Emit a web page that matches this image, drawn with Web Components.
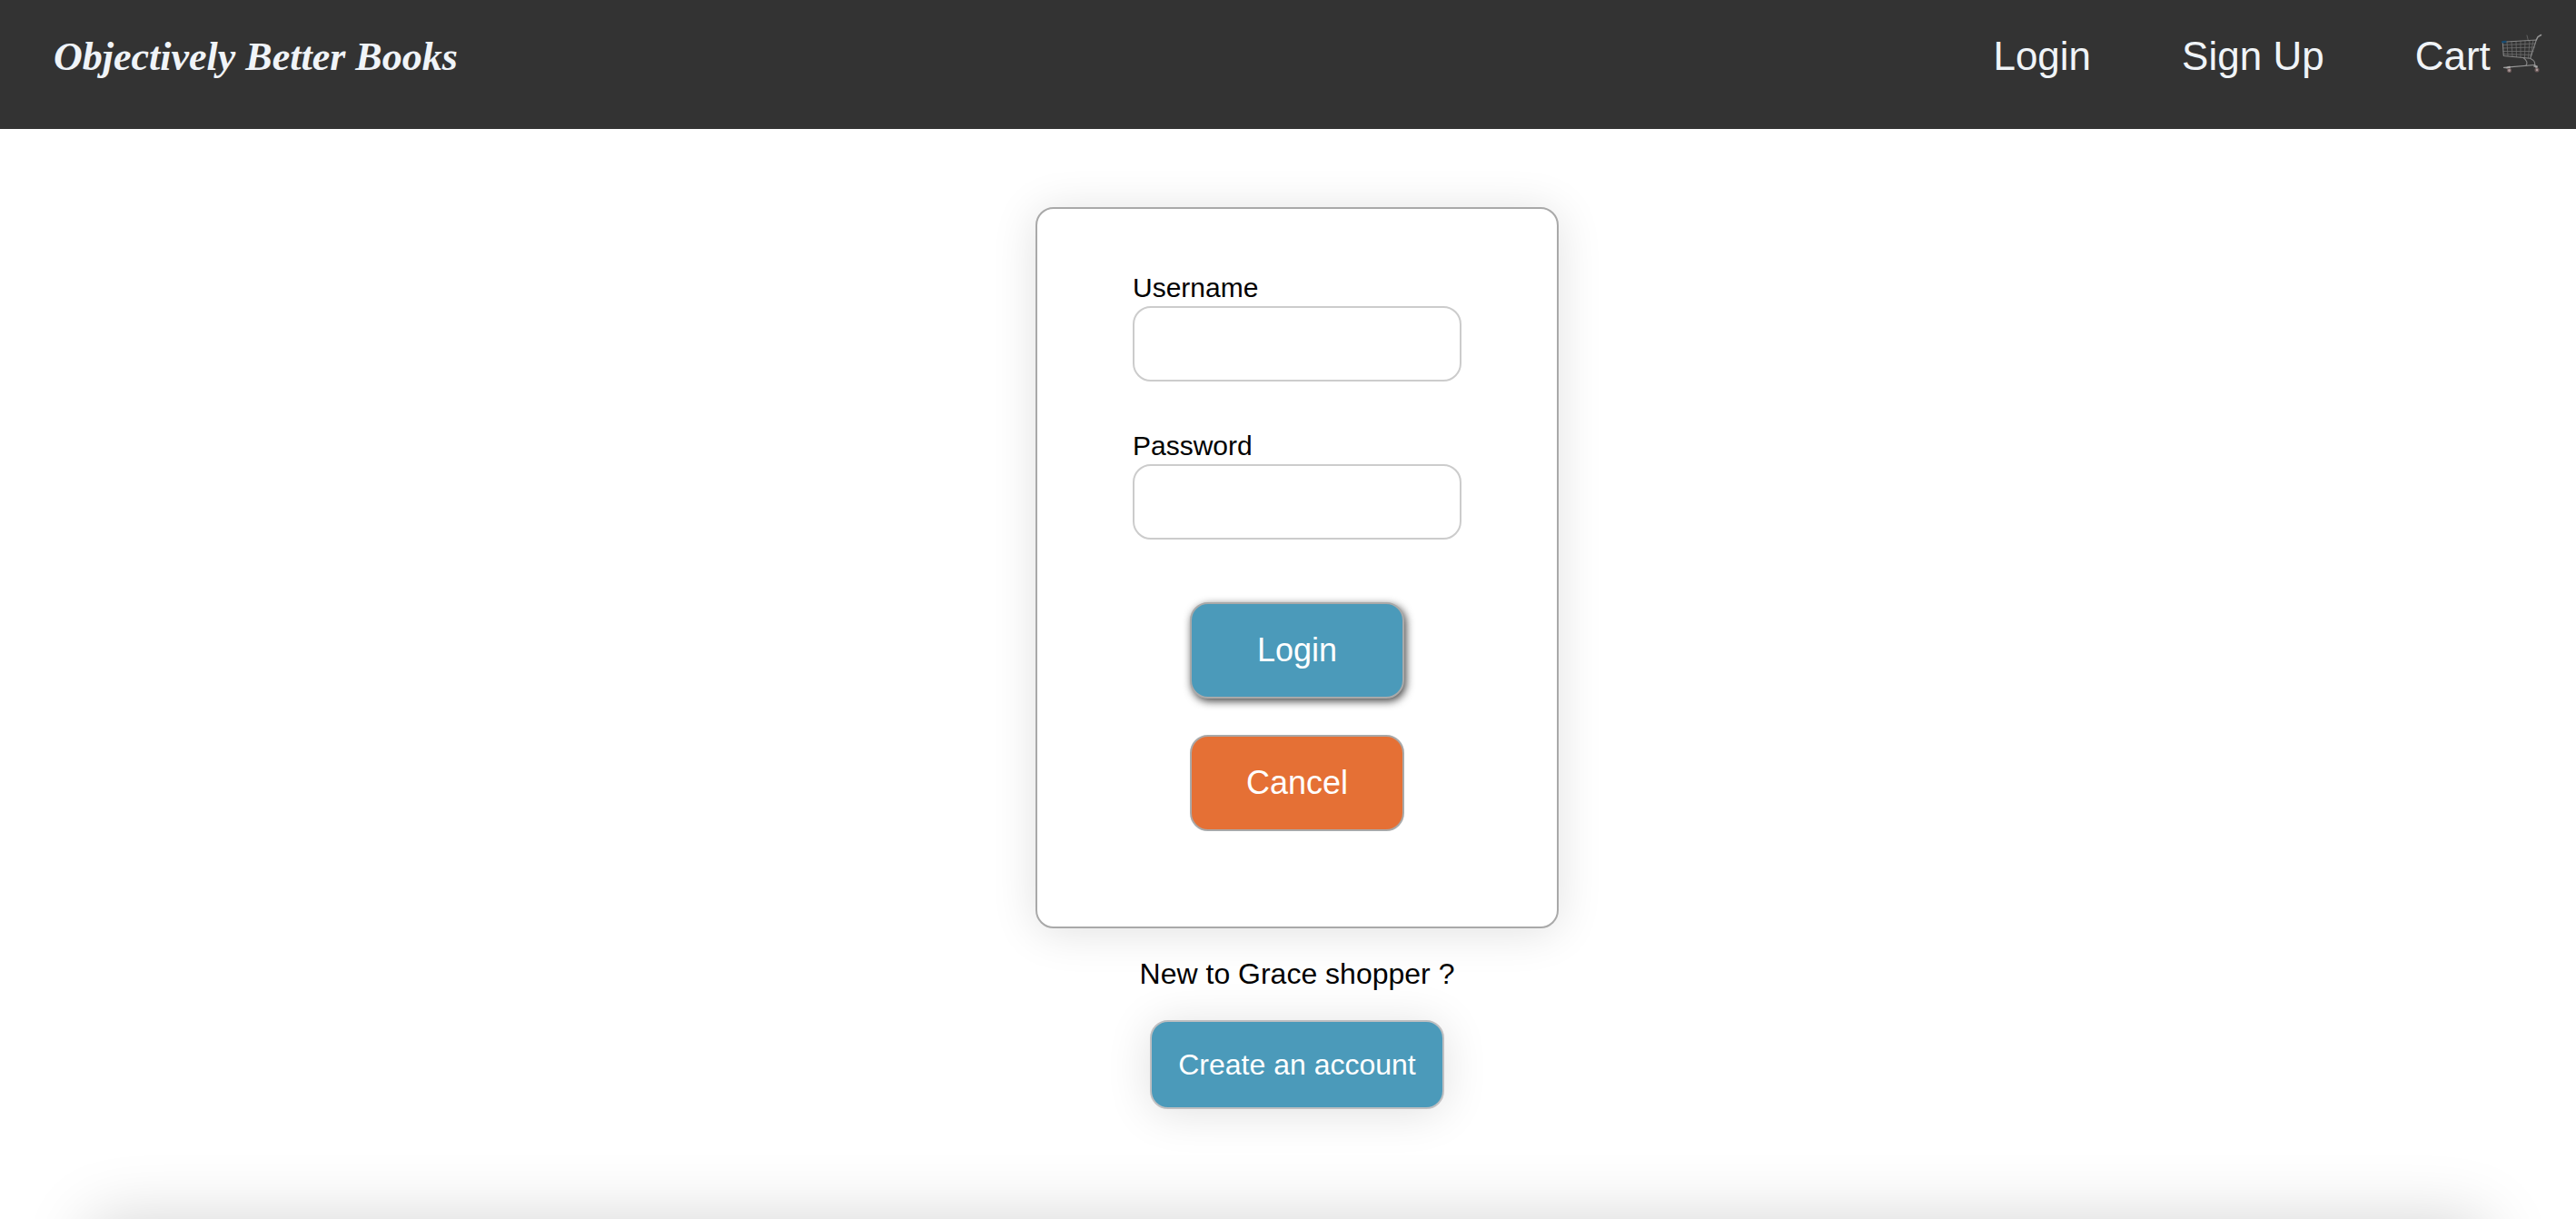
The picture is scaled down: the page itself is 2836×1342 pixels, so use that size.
<!DOCTYPE html>
<html lang="en">
<head>
<meta charset="utf-8">
<meta name="viewport" content="width=device-width, initial-scale=1">
<title>Objectively Better Books</title>
<style>
  body { margin: 0; background: #fff; color: #000; font-family: "Liberation Sans", Arial, sans-serif; }
</style>
</head>
<body>
<book-app>
  <site-header slot="header"></site-header>
  <login-card>
    <form-field label="Username" name="username" type="text"></form-field>
    <form-field label="Password" name="password" type="password"></form-field>
    <action-button slot="actions" variant="raised">Login</action-button>
    <action-button slot="actions" variant="cancel">Cancel</action-button>
  </login-card>
  <sign-up-prompt></sign-up-prompt>
</book-app>

<script>
  const define = (name, markup, setup) => {
    const template = document.createElement('template');
    template.innerHTML = markup;
    customElements.define(name, class extends HTMLElement {
      constructor() {
        super();
        this.attachShadow({ mode: 'open' }).append(template.content.cloneNode(true));
      }
      connectedCallback() {
        if (setup) setup(this, this.shadowRoot);
      }
    });
  };

  define('book-app', `
    <style>
      :host { display: flex; flex-direction: column; min-height: 100vh; overflow: clip; }
      main { display: flex; flex-direction: column; align-items: center; padding: 86px 0 40px 20px; }
      /* Only the soft upper edge of the footer panel shows at the fold. */
      footer { height: 200px; margin: auto 98px -200px; border-radius: 20px; box-shadow: 0 0 72px rgba(0, 0, 0, .17); }
    </style>
    <slot name="header"></slot>
    <main><slot></slot></main>
    <footer></footer>
  `);

  define('nav-link', `
    <style>
      :host { display: block; }
      a { color: inherit; text-decoration: none; white-space: nowrap; }
    </style>
    <a href="#"><slot></slot></a>
  `);

  define('cart-icon', `
    <style>
      :host { display: inline; }
      svg { width: 45px; height: 45px; vertical-align: -5px; }
    </style>
    <svg viewBox="0 0 45 45" fill="none" stroke-linecap="round" stroke-linejoin="round" aria-hidden="true">
      <g stroke="#6d6d6d" stroke-width=".8">
        <path d="M1.500 12.500 37.500 11M1.800 16 36.500 15M2 19.500 35 19.500M2.200 22.500 33.500 23.500"/>
        <path d="M6 9 7 24.500M11 8.800 12 25M16 8.500 16.500 25.500M21 8.200 21 26M26 8 25.500 26.500M31 7.500 29.500 27M35 7.300 32 25"/>
        <path d="M28 2 29.500 8"/>
      </g>
      <path d="M1.300 9.300 38.300 7 31.700 27.300 2.300 24.500Z" stroke="#858585" stroke-width="1.100"/>
      <path d="M38.300 7 40 3.700 43.500 1.500" stroke="#969696" stroke-width="1.500"/>
      <path d="M24 26.500Q30 31 27 35M32 27.500Q37 30 36.500 33L38 38" stroke="#858585" stroke-width="1.200"/>
      <path d="M2.500 37.300 36.500 34.500M2.500 37.300 7 38" stroke="#999" stroke-width="1.200"/>
      <path d="M1.300 9.300 4.500 9" stroke="#174b70" stroke-width="2.400"/>
      <path d="M6 37.500 9 36.500 8.500 39M36 36 39 36 38.500 39" stroke="#aaa" stroke-width="1.600"/>
      <circle cx="8.500" cy="40.500" r="2" fill="#a99" stroke="#655" stroke-width="1.200"/>
      <circle cx="39" cy="40" r="2" fill="#a99" stroke="#655" stroke-width="1.200"/>
    </svg>
  `);

  define('site-header', `
    <style>
      :host { display: block; background: #333; color: #f0f4f8; }
      header { display: flex; justify-content: space-between; align-items: baseline; padding: 37px 37px 54px 59px; line-height: 50px; }
      h1 { margin: 0; font: italic bold 44px/50px "Liberation Serif", "Times New Roman", serif; }
      nav { display: flex; gap: 100px; font-size: 44px; }
    </style>
    <header>
      <h1>Objectively Better Books</h1>
      <nav aria-label="Main">
        <nav-link>Login</nav-link>
        <nav-link>Sign Up</nav-link>
        <nav-link>Cart <cart-icon></cart-icon></nav-link>
      </nav>
    </header>
  `);

  define('form-field', `
    <style>
      :host { display: flex; flex-direction: column; }
      label { font-size: 30px; line-height: 40px; }
      input { box-sizing: border-box; width: 100%; height: 83px; padding: 0 20px; border: 2px solid #ccc; border-radius: 20px; background: #fff; font: inherit; font-size: 30px; outline: none; }
    </style>
    <label for="field"></label>
    <input id="field">
  `, (host, root) => {
    root.querySelector('label').textContent = host.getAttribute('label');
    const input = root.querySelector('input');
    input.name = host.getAttribute('name');
    input.type = host.getAttribute('type');
  });

  define('action-button', `
    <style>
      :host { display: block; --fill: #4b9aba; --edge: #a9a9a9; --size: 36px; --height: 106px; --width: 236px; --shadow: none; }
      :host([variant="raised"]) { --shadow: 2px 3px 10px #444; }
      :host([variant="cancel"]) { --fill: #e57035; }
      :host([variant="wide"]) { --edge: #bfbfc1; --size: 32px; --height: 98px; --width: 324px; --shadow: 0 4px 50px rgba(0, 0, 0, .12); }
      button { box-sizing: border-box; width: var(--width); height: var(--height); padding: 0; border: 2px solid var(--edge); border-radius: 20px; background: var(--fill); box-shadow: var(--shadow); color: #fff; font: inherit; font-size: var(--size); display: block; cursor: pointer; }
    </style>
    <button type="button"><slot></slot></button>
  `);

  define('login-card', `
    <style>
      :host { display: block; box-sizing: border-box; width: 100%; max-width: 576px; padding: 67px 105px 105px; border: 2px solid #a9a9a9; border-radius: 20px; background: #fff; box-shadow: 0 4px 50px rgba(0, 0, 0, .12); }
      form { display: flex; flex-direction: column; gap: 69px; }
      .fields { display: flex; flex-direction: column; gap: 51px; }
      .actions { display: flex; flex-direction: column; align-items: center; gap: 40px; }
    </style>
    <form>
      <div class="fields"><slot></slot></div>
      <div class="actions"><slot name="actions"></slot></div>
    </form>
  `);

  define('sign-up-prompt', `
    <style>
      :host { display: flex; flex-direction: column; align-items: center; gap: 31px; padding-top: 30px; }
      p { margin: 0; font-size: 32px; line-height: 40px; }
    </style>
    <p>New to Grace shopper ?</p>
    <action-button variant="wide">Create an account</action-button>
  `);
</script>
</body>
</html>
